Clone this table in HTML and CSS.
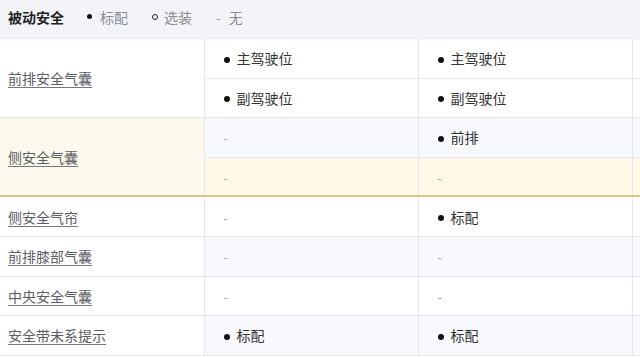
FILE: index.html
```html
<!DOCTYPE html>
<html>
<head>
<meta charset="utf-8">
<link rel="stylesheet" href="styles.css">
</head>
<body>
<div class="head">
  <span class="title">被动安全</span>
  <span class="legend"><i class="dot"></i>标配</span>
  <span class="legend"><i class="ring"></i>选装</span>
  <span class="legend"><span class="dash-l">-</span>无</span>
</div>
<table class="spec">
  <colgroup><col class="c1"><col class="c2"><col class="c3"><col class="c4"></colgroup>
  <tr class="r-white">
    <td rowspan="2" class="name"><a>前排安全气囊</a></td>
    <td><i class="dot"></i>主驾驶位</td>
    <td><i class="dot"></i>主驾驶位</td>
    <td class="edge"></td>
  </tr>
  <tr class="r-white">
    <td><i class="dot"></i>副驾驶位</td>
    <td><i class="dot"></i>副驾驶位</td>
    <td class="edge"></td>
  </tr>
  <tr class="r-gray">
    <td rowspan="2" class="name hl"><a>侧安全气囊</a></td>
    <td><span class="dash">-</span></td>
    <td><i class="dot"></i>前排</td>
    <td class="edge"></td>
  </tr>
  <tr class="r-yellow gold">
    <td><span class="dash">-</span></td>
    <td><span class="dash">-</span></td>
    <td class="edge"></td>
  </tr>
  <tr class="r-white">
    <td class="name"><a>侧安全气帘</a></td>
    <td><span class="dash">-</span></td>
    <td><i class="dot"></i>标配</td>
    <td class="edge"></td>
  </tr>
  <tr class="r-gray">
    <td class="name"><a>前排膝部气囊</a></td>
    <td><span class="dash">-</span></td>
    <td><span class="dash">-</span></td>
    <td class="edge"></td>
  </tr>
  <tr class="r-white">
    <td class="name"><a>中央安全气囊</a></td>
    <td><span class="dash">-</span></td>
    <td><span class="dash">-</span></td>
    <td class="edge"></td>
  </tr>
  <tr class="r-gray">
    <td class="name"><a>安全带未系提示</a></td>
    <td><i class="dot"></i>标配</td>
    <td><i class="dot"></i>标配</td>
    <td class="edge"></td>
  </tr>
</table>
</body>
</html>
```
FILE: styles.css
```css
html, body {
  margin: 0;
  padding: 0;
  background: #ffffff;
  font-family: "Noto Sans CJK SC", "Noto Sans", sans-serif;
  font-size: 14px;
  color: #333;
  overflow: hidden;
}
.head {
  height: 34px;
  padding-bottom: 4px;
  background: #f2f4f8;
  display: flex;
  align-items: center;
  padding-left: 8px;
  border-bottom: 1px solid #eceef2;
}
.title {
  font-weight: 700;
  font-size: 14px;
  color: #222;
  margin-right: 23px;
}
.legend {
  display: inline-flex;
  align-items: center;
  color: #8a8d93;
  font-size: 14px;
  margin-right: 24px;
}
.dash-l {
  margin-right: 8px;
  color: #999;
}
.dot {
  display: inline-block;
  width: 6px;
  height: 6px;
  border-radius: 50%;
  background: #111;
  margin-right: 7px;
  vertical-align: middle;
  position: relative;
  top: -1px;
}
.legend .dot { margin-right: 8px; width: 5px; height: 5px; }
.ring {
  display: inline-block;
  width: 4px;
  height: 4px;
  border-radius: 50%;
  border: 1.5px solid #222;
  margin-right: 6px;
}
.spec {
  border-collapse: collapse;
  table-layout: fixed;
  width: 640px;
}
.c1 { width: 204px; }
.c2 { width: 214px; }
.c3 { width: 214px; }
.c4 { width: 8px; }
.spec td {
  height: 38.6px;
  padding: 0 0 0 19px;
  border: 1px solid #e6e7eb;
  border-top: none;
  white-space: nowrap;
  color: #333;
}
.spec td:first-child { border-left: none; }
.spec td.edge { padding: 0; border-right: none; }
.spec td.name {
  padding-left: 8px;
  background: #fdfdfe;
}
.name a {
  color: #5a5d63;
  text-decoration: underline;
  text-underline-offset: 3px;
  text-decoration-color: #777;
}
.r-white td { background: #ffffff; }
.r-gray td { background: #f8f9fc; }
.r-gray td.name, .r-white td.name { background: #ffffff; }
.r-yellow td { background: #fef8e6; }
.spec td.hl { background: #fef9ed; border-bottom: 2px solid #d9c28c; }
.gold td { border-bottom: 2px solid #d9c28c; height: 37.6px; }
.dash {
  color: #999;
  font-size: 12px;
}
```
